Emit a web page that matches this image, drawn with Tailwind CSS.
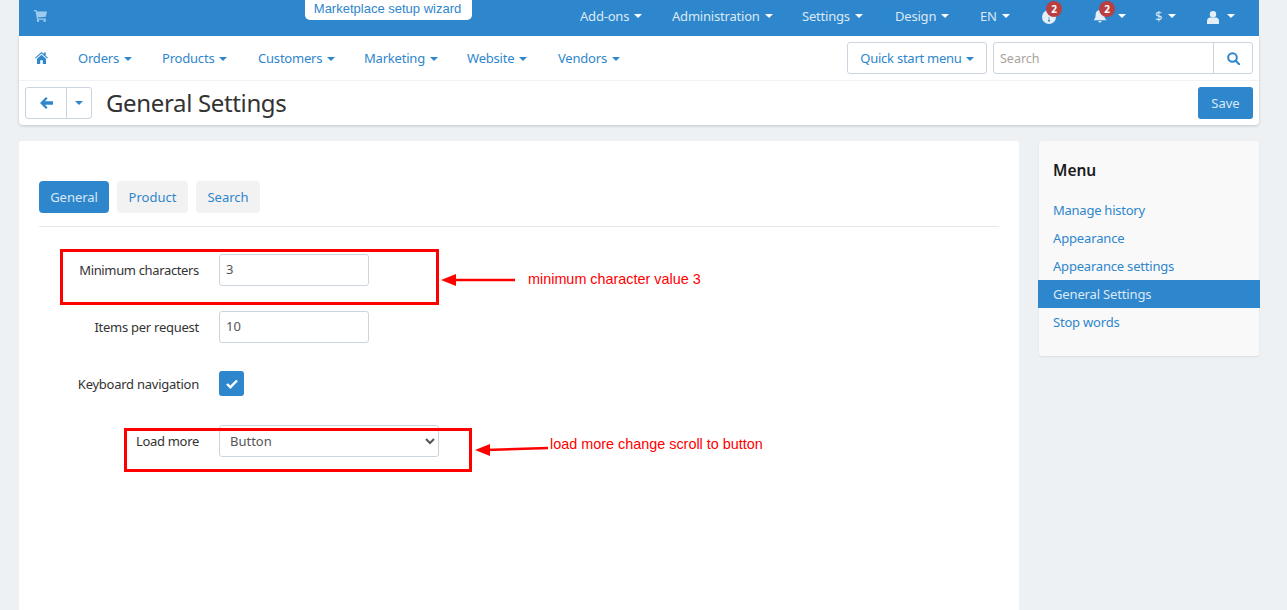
<!DOCTYPE html>
<html lang="en">
<head>
    <meta charset="UTF-8">
    <title>General Settings</title>
    <script src="https://cdn.jsdelivr.net/npm/@tailwindcss/browser@4"></script>
</head>
<body class="relative h-[610px] overflow-hidden bg-[#edf1f4] font-['Noto_Sans',sans-serif] text-[13px] text-[#333]">
    <div class="mx-[19px] w-[1240px]">
        <!-- Top bar -->
        <header class="relative flex h-9 items-center bg-[#2e86cd] pb-[2px] text-[#dbe9f5]">
            <svg class="absolute left-[15px] top-[10px] h-[12px] w-[13px] text-[#9ccbee]" viewBox="0 0 13 12" fill="currentColor"><path d="M0 0h2.4l.4 1.4H13l-1.2 5.4-8 .8.2 1h8v1.2H3L1.6 1.2H0z"/><circle cx="4" cy="10.8" r="1.2"/><circle cx="10.6" cy="10.8" r="1.2"/></svg>
            <a class="absolute left-[286px] top-0 flex h-5 w-[167px] items-center justify-center rounded-b-[5px] bg-white pb-[3px] pr-[2px] font-['Liberation_Sans',sans-serif] text-[13px] text-[#2e86cd]">Marketplace setup wizard</a>
            <nav class="ml-[561px] flex items-center tracking-[-0.2px]">
                <a class="flex w-[92px] items-center gap-[5px]">Add-ons <i class="mb-[2px] h-0 w-0 border-x-4 border-t-4 border-x-transparent border-t-white"></i></a>
                <a class="flex w-[130px] items-center gap-[5px]">Administration <i class="mb-[2px] h-0 w-0 border-x-4 border-t-4 border-x-transparent border-t-white"></i></a>
                <a class="flex w-[93px] items-center gap-[5px]">Settings <i class="mb-[2px] h-0 w-0 border-x-4 border-t-4 border-x-transparent border-t-white"></i></a>
                <a class="flex w-[85px] items-center gap-[5px]">Design <i class="mb-[2px] h-0 w-0 border-x-4 border-t-4 border-x-transparent border-t-white"></i></a>
                <a class="flex w-[61px] items-center gap-[5px]">EN <i class="mb-[2px] h-0 w-0 border-x-4 border-t-4 border-x-transparent border-t-white"></i></a>
                <a class="relative flex w-[52px] items-center">
                    <svg class="ml-[1px] h-[14px] w-[14px]" viewBox="0 0 14 14"><circle cx="7" cy="7" r="7" fill="#e3eef8"/><circle cx="7" cy="10.600" r="1.100" fill="#2e86cd"/><path d="M7 7.500v1" stroke="#2e86cd" stroke-width="1.400"/></svg>
                    <b class="absolute left-[5px] top-[-9px] flex h-4 w-4 items-center justify-center rounded-full bg-[#b93f40] text-[10px] leading-none text-white">2</b>
                </a>
                <a class="relative flex w-[55px] items-center gap-[11px]">
                    <svg class="h-[14px] w-[14px]" viewBox="0 0 14 14" fill="#e3eef8"><path d="M7 0c3 0 4.400 2.400 4.400 5.200 0 2.600 1 3.800 2 5H.6c1-1.200 2-2.400 2-5C2.600 2.400 4 0 7 0z"/><path d="M5.400 11h3.200a1.600 1.600 0 0 1-3.200 0z"/></svg>
                    <i class="mb-[2px] h-0 w-0 border-x-4 border-t-4 border-x-transparent border-t-white"></i>
                    <b class="absolute left-[6px] top-[-9px] flex h-4 w-4 items-center justify-center rounded-full bg-[#b93f40] text-[10px] leading-none text-white">2</b>
                </a>
                <a class="ml-[7px] flex w-[52px] items-center gap-[6px]">$ <i class="mb-[2px] h-0 w-0 border-x-4 border-t-4 border-x-transparent border-t-white"></i></a>
                <a class="flex items-center gap-[8px]">
                    <svg class="h-[13px] w-[12px]" viewBox="0 0 12 13" fill="#e3eef8"><circle cx="6" cy="3.200" r="3.200"/><path d="M0 13v-3c0-2 1.400-3.400 3-3.400h6c1.600 0 3 1.400 3 3.400v3z"/></svg>
                    <i class="mb-[2px] h-0 w-0 border-x-4 border-t-4 border-x-transparent border-t-white"></i>
                </a>
            </nav>
        </header>

        <!-- Main nav + toolbar -->
        <div class="rounded-b-[4px] bg-white shadow-[0_1px_3px_rgba(0,0,0,0.18)]">
            <div class="flex h-[45px] items-center border-b border-[#f0f2f4] text-[#2e86cd]">
                <svg class="ml-[16px] mr-[30px] h-[12px] w-[13px]" viewBox="0 0 13 12" fill="#2e86cd"><path d="M6.500 0l2.300 2V.6h1.900v3.100L13 5.800l-.7.800-5.800-5-5.800 5-.7-.8z"/><path d="M6.500 2.800l4.500 3.900V12H7.800V8.300H5.200V12H2V6.700z"/></svg>
                <nav class="flex items-center pt-[1px] tracking-[-0.2px]">
                    <a class="flex w-[84px] items-center gap-[5px]">Orders <i class="h-0 w-0 border-x-4 border-t-4 border-x-transparent border-t-[#2e86cd]"></i></a>
                    <a class="flex w-[96px] items-center gap-[5px]">Products <i class="h-0 w-0 border-x-4 border-t-4 border-x-transparent border-t-[#2e86cd]"></i></a>
                    <a class="flex w-[106px] items-center gap-[5px]">Customers <i class="h-0 w-0 border-x-4 border-t-4 border-x-transparent border-t-[#2e86cd]"></i></a>
                    <a class="flex w-[103px] items-center gap-[5px]">Marketing <i class="h-0 w-0 border-x-4 border-t-4 border-x-transparent border-t-[#2e86cd]"></i></a>
                    <a class="flex w-[91px] items-center gap-[5px]">Website <i class="h-0 w-0 border-x-4 border-t-4 border-x-transparent border-t-[#2e86cd]"></i></a>
                    <a class="flex items-center gap-[5px]">Vendors <i class="h-0 w-0 border-x-4 border-t-4 border-x-transparent border-t-[#2e86cd]"></i></a>
                </nav>
                <a class="ml-auto flex h-8 w-[140px] items-center justify-center gap-[4px] rounded-[3px] border border-[#ccd5df] pt-[1px] tracking-[-0.25px]">Quick start menu <i class="h-0 w-0 border-x-4 border-t-4 border-x-transparent border-t-[#2e86cd]"></i></a>
                <div class="ml-[6px] mr-[6px] flex h-8 w-[260px] rounded-[3px] border border-[#ccd5df]">
                    <span class="flex-1 pl-[6px] pt-[1px] text-[12.5px] leading-[30px] text-[#a9a29c]">Search</span>
                    <span class="flex w-[39px] items-center justify-center border-l border-[#ccd5df]">
                        <svg class="h-[13px] w-[13px]" viewBox="0 0 13 13" fill="none" stroke="#2e86cd" stroke-width="2"><circle cx="5.500" cy="5.500" r="4.300"/><path d="M8.700 8.700l3.500 3.500" stroke-linecap="round"/></svg>
                    </span>
                </div>
            </div>
            <div class="flex h-[44px] items-center pl-[6px] pr-[6px]">
                <div class="flex h-8 w-[67px] rounded-[3px] border border-[#ccd5df]">
                    <span class="flex w-[41px] items-center justify-center border-r border-[#ccd5df]">
                        <svg class="h-[12px] w-[13px]" viewBox="0 0 13 12" fill="#2e86cd"><path d="M6 0l1.600 1.600L5 4.300h8v3.400H5l2.600 2.700L6 12 0 6z"/></svg>
                    </span>
                    <span class="flex flex-1 items-center justify-center"><i class="h-0 w-0 border-x-4 border-t-4 border-x-transparent border-t-[#2e86cd]"></i></span>
                </div>
                <h1 class="ml-[14px] text-[24px] tracking-[-0.35px] text-[#333]">General Settings</h1>
                <a class="ml-auto flex h-8 w-[55px] items-center justify-center rounded-[3px] bg-[#2e86cd] pt-[1px] text-[#dbe9f5]">Save</a>
            </div>
        </div>

        <!-- Content -->
        <div class="mt-4 flex gap-5">
            <main class="h-[469px] w-[1000px] rounded-t-[3px] bg-white px-5 pt-10">
                <div class="flex gap-2 border-b border-[#e3e8ee] pb-[13px]">
                    <a class="flex h-8 w-[70px] items-center justify-center rounded-[4px] bg-[#2e86cd] pt-[1px] tracking-[-0.05px] text-[#dbe9f5]">General</a>
                    <a class="flex h-8 w-[71px] items-center justify-center rounded-[4px] bg-[#f2f2f2] pt-[1px] text-[#2e86cd]">Product</a>
                    <a class="flex h-8 w-[64px] items-center justify-center rounded-[4px] bg-[#f2f2f2] pt-[1px] text-[#2e86cd]">Search</a>
                </div>
                <form class="pt-[27px]">
                    <div class="flex h-[57px] items-start">
                        <label class="w-[160px] text-right leading-8 tracking-[-0.35px]">Minimum characters</label>
                        <div class="ml-5 flex h-8 w-[150px] items-center rounded-[3px] border border-[#ccd5df] pl-[6px] text-[#555]">3</div>
                    </div>
                    <div class="flex h-[60px] items-start">
                        <label class="w-[160px] text-right leading-8 tracking-[-0.26px]">Items per request</label>
                        <div class="ml-5 flex h-8 w-[150px] items-center rounded-[3px] border border-[#ccd5df] pl-[6px] text-[#555]">10</div>
                    </div>
                    <div class="flex h-[54px] items-start">
                        <label class="w-[160px] text-right leading-[26px] tracking-[-0.25px]">Keyboard navigation</label>
                        <span class="ml-5 flex h-[25px] w-[25px] items-center justify-center rounded-[3px] bg-[#2e86cd]">
                            <svg class="h-[10px] w-[12px]" viewBox="0 0 12 10" fill="none" stroke="#fff" stroke-width="2.400"><path d="M1 5l3.400 3.200L11 1.500"/></svg>
                        </span>
                    </div>
                    <div class="flex items-start">
                        <label class="w-[160px] text-right leading-8 tracking-[-0.3px]">Load more</label>
                        <select class="ml-5 h-8 w-[220px] rounded-[3px] border border-[#ccd5df] bg-white pl-[6px] text-[13px] text-[#555]"><option>Button</option></select>
                    </div>
                </form>
            </main>
            <aside class="h-[215px] w-[220px] rounded-[3px] bg-[#f9f9f9] pt-[19px] shadow-[0_1px_2px_rgba(0,0,0,0.08)]">
                <h2 class="px-[14px] text-[15.5px] font-semibold leading-5 text-[#1a1a1a]">Menu</h2>
                <ul class="mt-[16px] text-[#2e86cd]">
                    <li class="px-[14px] leading-7 tracking-[-0.25px]">Manage history</li>
                    <li class="px-[14px] leading-7 tracking-[-0.15px]">Appearance</li>
                    <li class="px-[14px] leading-7 tracking-[-0.2px]">Appearance settings</li>
                    <li class="-mx-px bg-[#2e86cd] px-[15px] leading-7 tracking-[-0.15px] text-[#dbe9f5]">General Settings</li>
                    <li class="px-[14px] leading-7 tracking-[-0.2px]">Stop words</li>
                </ul>
            </aside>
        </div>
    </div>

    <!-- Red annotations drawn on top of the screenshot -->
    <div class="absolute left-[60px] top-[249px] h-[56px] w-[379px] border-[3px] border-[#ff0000]"></div>
    <div class="absolute left-[124px] top-[428px] h-[44px] w-[348px] border-[3px] border-[#ff0000]"></div>
    <svg class="absolute left-[440px] top-[265px] h-[200px] w-[120px]" viewBox="0 0 120 200">
        <path d="M75 15H14" stroke="#ff0000" stroke-width="2.500"/>
        <path d="M1 15l15-6v12z" fill="#ff0000"/>
        <path d="M108 183l-62 2" stroke="#ff0000" stroke-width="2.500"/>
        <path d="M35 185l15-6v12z" fill="#ff0000"/>
    </svg>
    <span class="absolute left-[528px] top-[271px] font-['Liberation_Sans',sans-serif] text-[14.4px] leading-4 text-[#ff0000]">minimum character value 3</span>
    <span class="absolute left-[550px] top-[436px] font-['Liberation_Sans',sans-serif] text-[14.4px] leading-4 text-[#ff0000]">load more change scroll to button</span>
</body>
</html>
